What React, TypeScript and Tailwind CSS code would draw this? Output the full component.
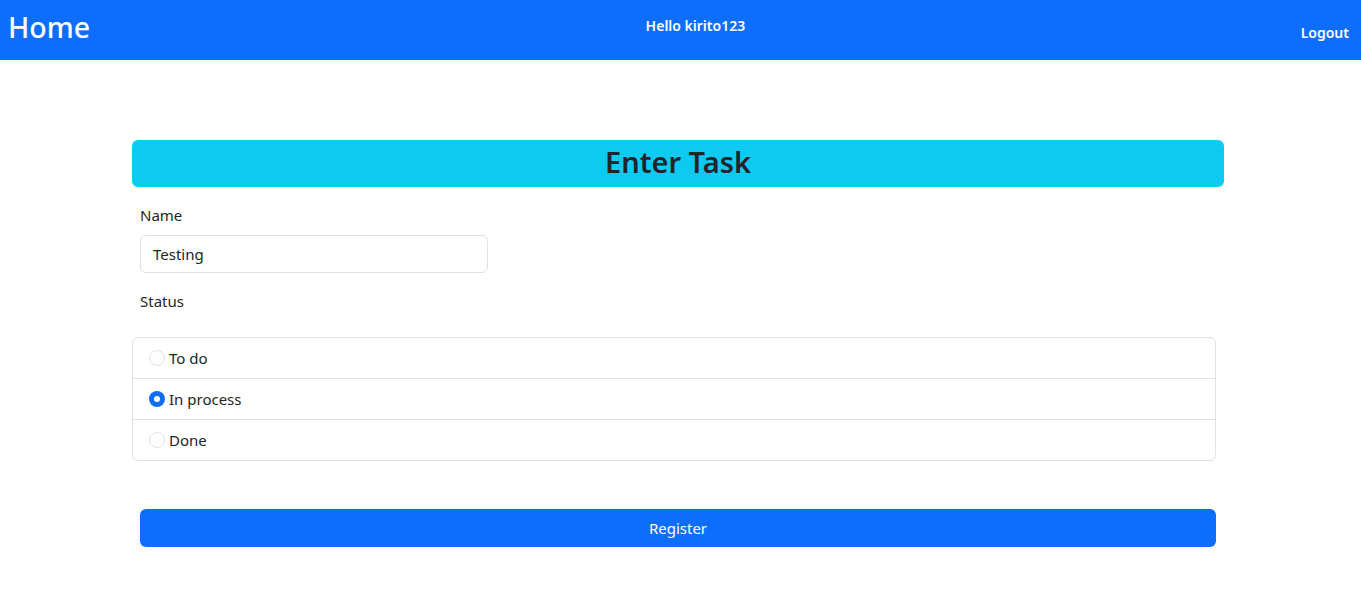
import React from "react";

export default function App() {
  const font = { fontFamily: '"Noto Sans", "Segoe UI", sans-serif' };
  const items = [
    { label: "To do", checked: false },
    { label: "In process", checked: true },
    { label: "Done", checked: false },
  ];
  return (
    <div className="min-h-[601px] w-full bg-white text-[#212529]" style={font}>
      <nav className="flex h-[60px] items-start justify-between bg-[#0d6efd] text-white">
        <div className="pl-[8px] pt-[9px] text-[28.5px] font-medium leading-[36px]">Home</div>
        <div className="pt-[16px] text-[14px] font-semibold leading-[20px]">Hello kirito123</div>
        <div className="pr-[12px] pt-[23px] text-[14px] font-semibold leading-[20px]">Logout</div>
      </nav>
      <div className="ml-[132px] mt-[80px] w-[1092px]">
        <div className="flex h-[47px] items-center justify-center rounded-[6px] bg-[#0dcaf0] pb-[4px]">
          <h1 className="text-[29px] font-semibold leading-[36px] text-[#212529]">Enter Task</h1>
        </div>
        <div className="pl-[8px] pr-[8px]">
          <div className="mt-[16px] text-[15px] leading-[24px]">Name</div>
          <div className="mt-[8px] flex h-[38px] w-[348px] items-center rounded-[6px] border border-[#dee2e6] px-[12px] text-[15px]">
            Testing
          </div>
          <div className="mt-[16px] text-[15px] leading-[24px]">Status</div>
        </div>
        <div className="mt-[24px] w-[1084px] overflow-hidden rounded-[6px] border border-[#dee2e6]">
          {items.map((it, i) => (
            <div
              key={it.label}
              className={`flex items-center gap-[4px] pl-[16px] text-[15px] ${i > 0 ? "h-[41px] border-t border-[#dee2e6]" : "h-[40px]"}`}
            >
              {it.checked ? (
                <span className="flex h-[16px] w-[16px] items-center justify-center rounded-full bg-[#0d6efd]">
                  <span className="h-[6px] w-[6px] rounded-full bg-white" />
                </span>
              ) : (
                <span className="h-[16px] w-[16px] rounded-full border border-[#dee2e6] bg-white" />
              )}
              <span>{it.label}</span>
            </div>
          ))}
        </div>
        <div className="ml-[8px] mt-[48px] flex h-[38px] w-[1076px] items-center justify-center rounded-[6px] bg-[#0d6efd] text-[15px] text-white">
          Register
        </div>
      </div>
    </div>
  );
}
